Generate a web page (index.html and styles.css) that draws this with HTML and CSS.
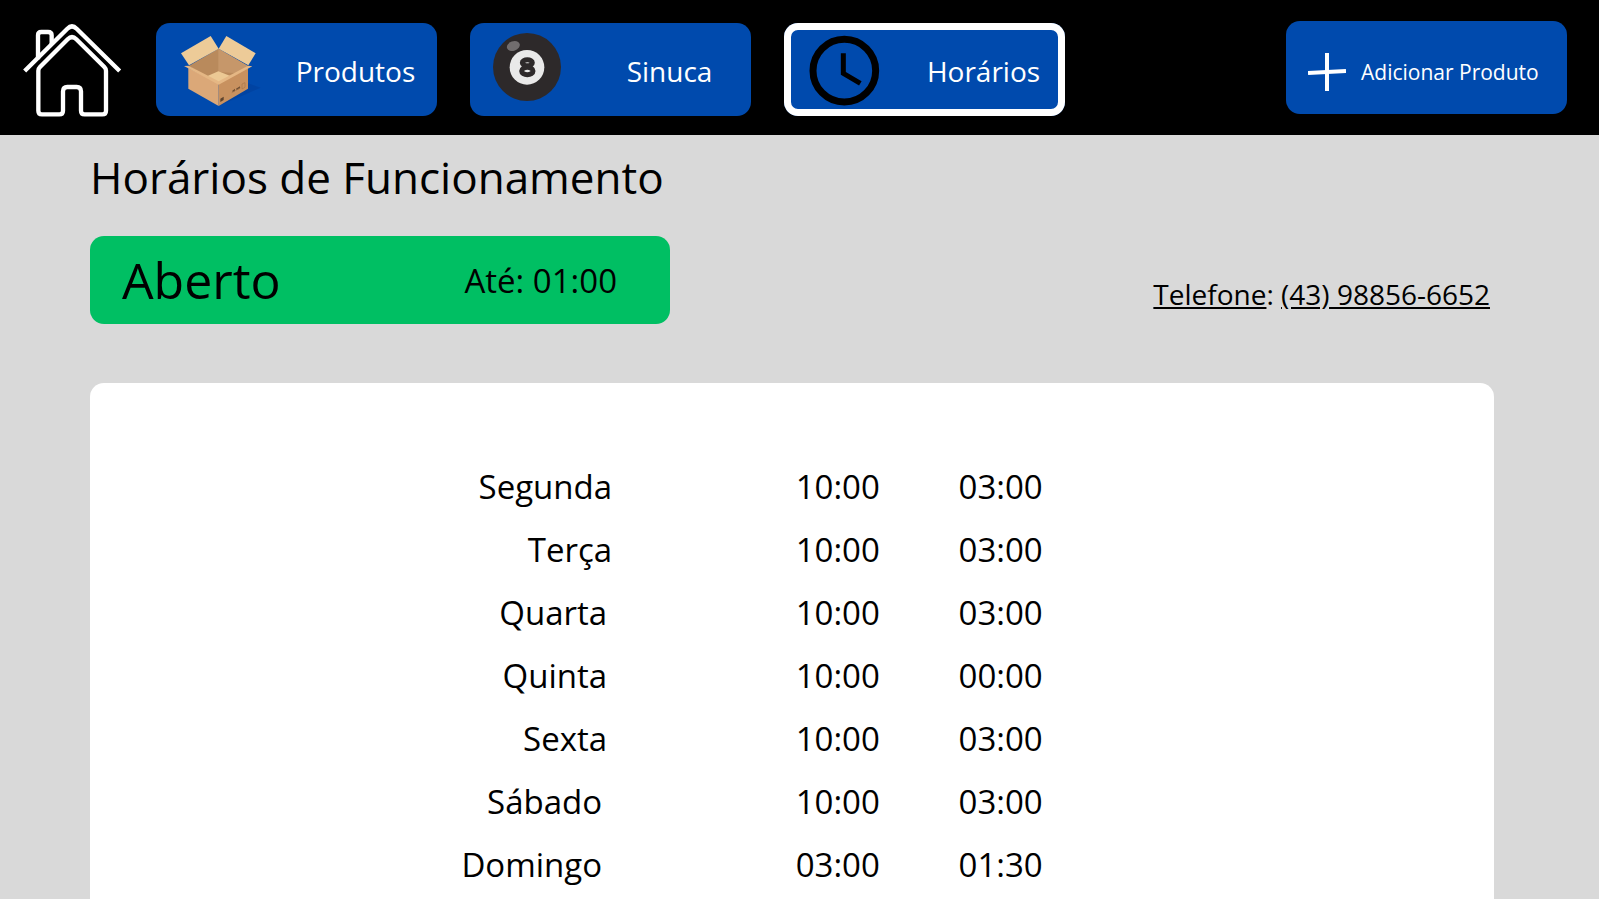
FILE: index.html
```html
<!DOCTYPE html>
<html lang="pt-BR">
<head>
<meta charset="utf-8">
<meta name="viewport" content="width=device-width, initial-scale=1">
<title>Horários de Funcionamento</title>
<link rel="stylesheet" href="styles.css">
</head>
<body>
<header class="topbar">
  <a class="home" href="#" aria-label="Início">
    <svg class="home-icon" viewBox="72 63 288 279" fill="none" stroke="#fff" stroke-width="13">
      <path d="M74 213L202 86Q216 72 230 86L359 213"/>
      <path d="M114 178V106Q114 96 124 96H144Q155 96 155 106V134"/>
      <path d="M115 332V212Q115 206 120 201L203 118Q216 105 229 118L313 201Q318 206 318 212V332Q318 343 307 343H254Q243 343 243 332V274Q243 261 230 261H202Q189 261 189 274V332Q189 343 178 343H126Q115 343 115 332Z"/>
    </svg>
  </a>
  <nav class="menu">
    <a class="tab" href="#">
      <svg class="tab-icon" viewBox="531 69 252 279">
        <path d="M656 318L782 263L744 250Z" fill="#003f9b" opacity=".6"/>
        <path d="M566 198L655 146L744 198L656 250Z" fill="#b98a5c"/>
        <path d="M655 146L744 198L713 220L655 216Z" fill="#c6976a"/>
        <path d="M614 232L655 214L697 230L656 252Z" fill="#ecc994"/>
        <path d="M543 160L632 108L656 146L567 196Z" fill="#edcb98"/>
        <path d="M656 146L679 108L767 160L745 196Z" fill="#edcb98"/>
        <path d="M565 204L656 250V318L565 266Z" fill="#dba878"/>
        <path d="M656 250L744 204V266L656 318Z" fill="#c8915f"/>
        <path d="M552 198L566 197L656 244L744 197L757 199L656 254Z" fill="#e5b784"/>
        <path d="M661 296L671 290V300L661 306Z" fill="#5d432e"/>
        <path d="M697 272L705 266V273L698 277ZM708 266L720 259V265L710 271Z" fill="#6b4d34"/>
        <path d="M695 278L722 263M726 252L735 248V262L726 267Z" fill="none" stroke="#a87648" stroke-width="2"/>
      </svg>
      <span class="tab-label">Produtos</span>
    </a>
    <a class="tab" href="#">
      <svg class="tab-icon" viewBox="93 39 252 279">
        <circle cx="201" cy="171" r="102" fill="#2d292a"/>
        <ellipse cx="160" cy="108" rx="20" ry="14" fill="#716d6e" transform="rotate(-20 160 108)"/>
        <circle cx="201" cy="172" r="52" fill="#e9e9e9"/>
        <g fill="none" stroke="#2d292a" stroke-width="15">
          <ellipse cx="202" cy="158" rx="15" ry="9"/>
          <ellipse cx="202" cy="183" rx="17" ry="11"/>
        </g>
      </svg>
      <span class="tab-label">Sinuca</span>
    </a>
    <a class="tab tab-active" href="#" aria-current="page">
      <svg class="tab-icon" viewBox="105 41 252 279" fill="none" stroke="#000">
        <circle cx="223" cy="184" r="94" stroke-width="21"/>
        <path d="M220 132V192L271 222" stroke-width="15"/>
      </svg>
      <span class="tab-label">Horários</span>
    </a>
  </nav>
  <button class="add" type="button">
    <svg class="add-icon" viewBox="0 0 38 38" fill="none" stroke="#fff" stroke-width="4">
      <path d="M19 0V38"/><path d="M0 20L38 18"/>
    </svg>
    <span>Adicionar Produto</span>
  </button>
</header>
<main class="page">
  <h1 class="title">Horários de Funcionamento</h1>
  <div class="summary">
    <div class="status">
      <strong class="status-state">Aberto</strong>
      <span class="status-until">Até: 01:00</span>
    </div>
    <p class="phone"><span class="underlined">Telefone</span>: <a class="underlined" href="tel:+5543988566652">(43) 98856-6652</a></p>
  </div>
  <section class="card">
    <table class="hours">
      <colgroup><col class="col-day"><col class="col-open"><col class="col-close"><col></colgroup>
      <tbody class="early">
        <tr><th scope="row">Segunda</th><td>10:00</td><td>03:00</td></tr>
        <tr><th scope="row">Terça</th><td>10:00</td><td>03:00</td></tr>
      </tbody>
      <tbody class="middle">
        <tr><th scope="row">Quarta</th><td>10:00</td><td>03:00</td></tr>
        <tr><th scope="row">Quinta</th><td>10:00</td><td>00:00</td></tr>
        <tr><th scope="row">Sexta</th><td>10:00</td><td>03:00</td></tr>
      </tbody>
      <tbody class="weekend">
        <tr><th scope="row">Sábado</th><td>10:00</td><td>03:00</td></tr>
        <tr><th scope="row">Domingo</th><td>03:00</td><td>01:30</td></tr>
      </tbody>
    </table>
  </section>
</main>
</body>
</html>
```
FILE: styles.css
```css
* { box-sizing: border-box; }

body {
  margin: 0;
  min-height: 100vh;
  display: flex;
  flex-direction: column;
  background: #d9d9d9;
  color: #000;
  font-family: "Open Sans", "Noto Sans", sans-serif;
}

a { color: inherit; }

.topbar {
  display: flex;
  align-items: center;
  gap: 36px;
  padding: 19px 32px 19px 24px;
  background: #000;
}

.home { display: flex; }
.home-icon { width: 96px; height: 93px; overflow: visible; }

.menu {
  display: flex;
  gap: 33px;
  padding-top: 4px;
}

.tab,
.add {
  display: flex;
  align-items: center;
  width: 281px;
  height: 93px;
  border: 0;
  border-radius: 14px;
  background: #004aad;
  color: #fff;
  font-family: inherit;
  text-decoration: none;
}

.tab {
  gap: 13px;
  padding-left: 21px;
  font-size: 28px;
}

.tab-active { box-shadow: inset 0 0 0 7px #fff; }
.tab-icon { flex: none; width: 84px; height: 93px; }
.tab-label { flex: 1; padding-top: 2px; text-align: center; }

.add {
  gap: 15px;
  margin-left: auto;
  padding: 8px 0 0 22px;
  font-size: 21px;
  white-space: nowrap;
}

.add-icon { flex: none; width: 38px; height: 38px; }

.page {
  flex: 1;
  display: flex;
  flex-direction: column;
  padding: 12px 105px 0 90px;
}

.title {
  margin: 0 0 28px;
  font-size: 44px;
  font-weight: 400;
  line-height: 61px;
}

.summary {
  display: flex;
  align-items: flex-end;
  justify-content: space-between;
  margin-bottom: 59px;
}

.status {
  display: flex;
  align-items: center;
  justify-content: space-between;
  width: 580px;
  height: 88px;
  padding: 0 53px 0 32px;
  border-radius: 14px;
  background: #00bf63;
}

.status-state { font-size: 50px; font-weight: 400; }
.status-until { font-size: 33px; }

.phone {
  margin: 0;
  padding: 0 4px 11px 0;
  font-size: 28px;
}

.underlined { text-decoration: underline; }

.card {
  flex: 1;
  padding-top: 72px;
  border-radius: 14px 14px 0 0;
  background: #fff;
}

.hours {
  width: 100%;
  table-layout: fixed;
  border-collapse: collapse;
  font-size: 33px;
  line-height: 46px;
}

.col-day { width: 37.4%; }
.col-open { width: 19%; }
.col-close { width: 11.6%; }

.hours tr { height: 63px; }

.hours th,
.hours td {
  padding: 0 2px 0 0;
  font-weight: 400;
  text-align: right;
}

.hours .early th { padding-right: 3px; }
.hours .middle th { padding-right: 8px; }
.hours .weekend th { padding-right: 13px; }
```
